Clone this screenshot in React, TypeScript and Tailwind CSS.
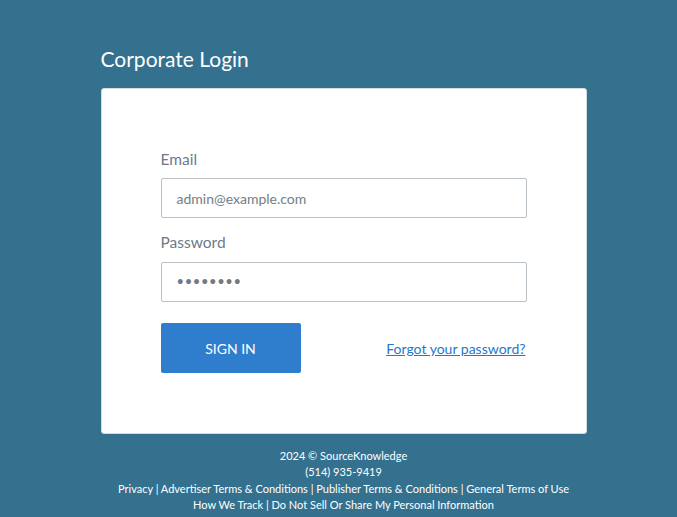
import React from "react";

export default function App() {
  return (
    <div
      className="min-h-[517px] w-full bg-[#33718f] pl-[10px]"
      style={{ fontFamily: "Lato, 'Noto Sans', sans-serif" }}
    >
      <div className="mx-auto w-[486px] pt-[45px]">
        <h1 className="text-[21px] leading-[28px] text-white">Corporate Login</h1>
        <div className="mt-[15px] h-[346px] rounded-[3px] border border-[#d5dbe0] bg-white px-[59px] pt-[61px]">
          <label className="block text-[15.5px] leading-[19px] text-[#6c7a89]">Email</label>
          <div className="mt-[9px] flex h-[40px] w-[366px] items-center rounded-[2px] border border-[#b9c0c6] px-[15px] text-[14px] text-[#727e89]">
            admin@example.com
          </div>
          <label className="mt-[15px] block text-[15.5px] leading-[19px] text-[#6c7a89]">Password</label>
          <div className="mt-[10px] flex h-[40px] w-[366px] items-center rounded-[2px] border border-[#b9c0c6] px-[15px] text-[13px] tracking-[0.6px] text-[#6e7a85]">
            ••••••••
          </div>
          <div className="mt-[21px] flex w-[366px] items-center justify-between">
            <button className="h-[50px] w-[140px] rounded-[2px] bg-[#2f7dcd] text-[14px] text-white">
              SIGN IN
            </button>
            <a href="#" className="mr-[1px] text-[14px] text-[#2377cf] underline">
              Forgot your password?
            </a>
          </div>
        </div>
        <div className="mt-[14px] text-center text-[11px] leading-[16.3px] text-white">
          <div>2024 © SourceKnowledge</div>
          <div>(514) 935-9419</div>
          <div className="whitespace-nowrap">
            Privacy | Advertiser Terms &amp; Conditions | Publisher Terms &amp; Conditions | General Terms of Use
          </div>
          <div>How We Track | Do Not Sell Or Share My Personal Information</div>
        </div>
      </div>
    </div>
  );
}
